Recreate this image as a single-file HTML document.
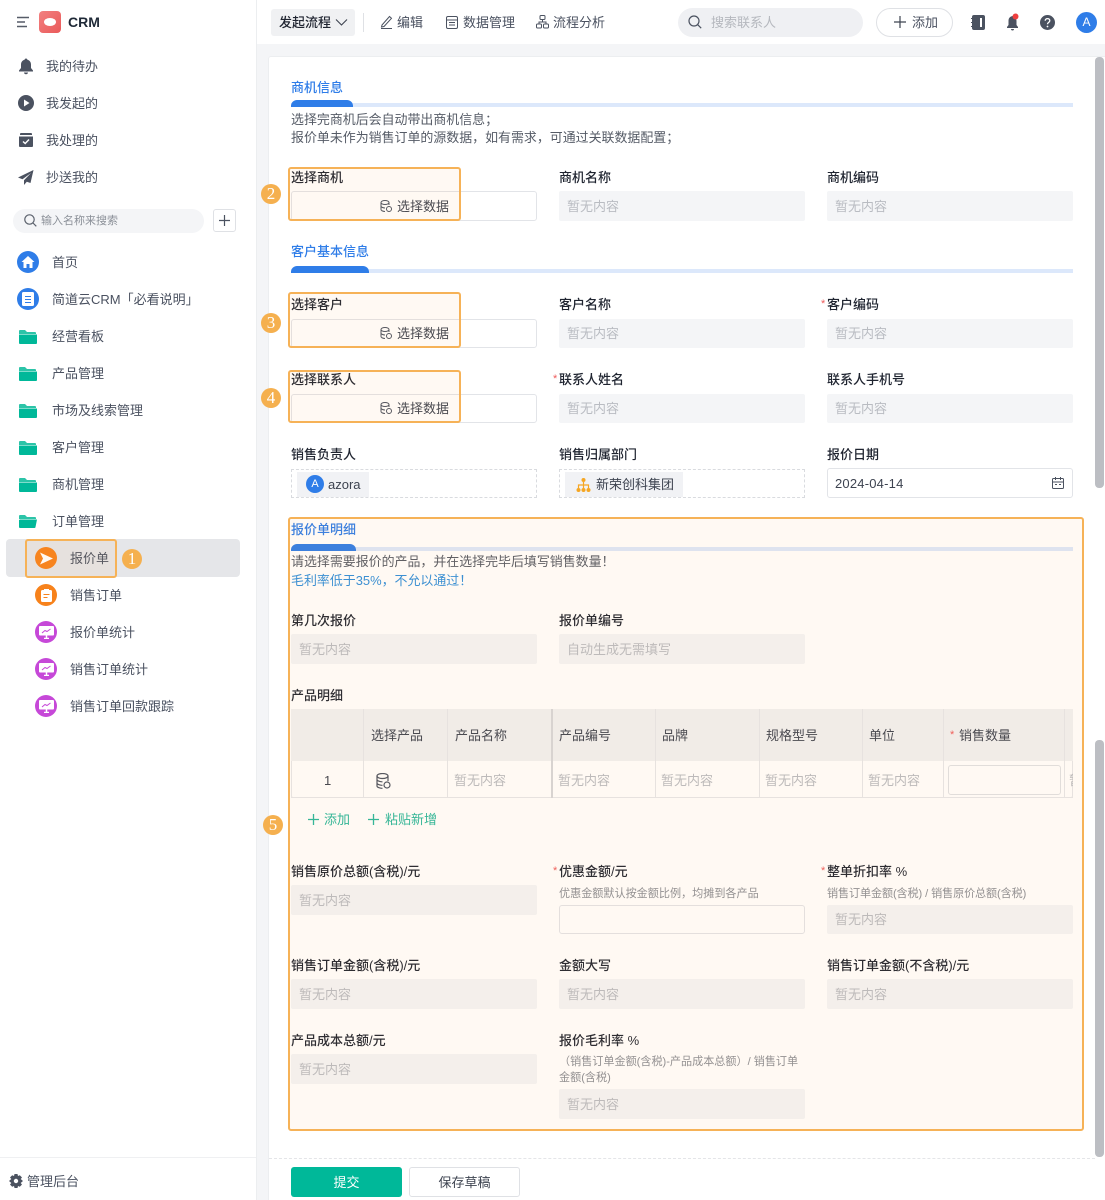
<!DOCTYPE html>
<html lang="zh"><head><meta charset="utf-8"><title>CRM</title>
<style>
html,body{margin:0;padding:0}
html{width:1105px;height:1200px;overflow:hidden}
body{width:1105px;height:1200px;position:relative;overflow:hidden;background:#f4f5f7;font-family:"Liberation Sans","Noto Sans CJK SC",sans-serif;font-size:13px;color:#1f2937}
div,svg{position:absolute;box-sizing:border-box}
.t,.l,.ti,.d,.sel,.hc,.c,.h{margin-top:1px}
.t{white-space:nowrap;line-height:18px;height:18px}
.m{color:#4a5160}
.l{white-space:nowrap;line-height:18px;height:18px;font-weight:500;color:#1f2430}
.f{width:246px;height:30px;background:#f4f5f7;border-radius:2px;color:#b9bcc2;padding-left:8px;line-height:32px;white-space:nowrap}
.i{width:246px;height:30px;background:#fff;border:1px solid #e2e4e8;border-radius:3px}
.ti{white-space:nowrap;line-height:18px;height:18px;color:#2f7de8;font-weight:500}
.bar{height:4px;left:291px;width:782px;background:#dce8fb}
.pill{height:7px;left:291px;background:#2f7de8;border-radius:6px 6px 0 0}
.o{border:2px solid #f6b257;background:rgba(255,176,80,.07);border-radius:3px;z-index:5}
.n{width:20px;height:20px;border-radius:50%;background:#f5b04f;color:#fff;text-align:center;line-height:20px;font-family:"Liberation Serif",serif;font-size:17px;z-index:6}
.d{white-space:nowrap;line-height:18px;height:18px;color:#555b66;font-size:12.95px}
.h{white-space:nowrap;line-height:16px;height:16px;color:#8b8f96;font-size:11.1px}
.sel{white-space:nowrap;line-height:18px;height:18px;color:#3d4350}
.th{top:709px;height:52px;background:#f0f1f3}
.v{width:1px;background:#e6e7ea;top:709px;height:89px}
.c{top:771px;color:#b9bcc2;white-space:nowrap;line-height:18px;height:18px;font-size:13px}
.hc{top:726px;color:#3d4350;white-space:nowrap;line-height:18px;height:18px}
.circ{width:22px;height:22px;border-radius:50%}
</style></head><body>

<!-- sidebar -->
<div style="left:0;top:0;width:257px;height:1200px;background:#fff;border-right:1px solid #eceef0"></div>
<svg style="left:16px;top:16px" width="14" height="12" viewBox="0 0 14 12"><path d="M1 1.500h12M1 6h8M1 10.500h10" stroke="#565c68" stroke-width="1.500" fill="none"/></svg>
<div style="left:39px;top:11px;width:22px;height:22px;border-radius:4px;background:linear-gradient(135deg,#f28080,#ea5a5a)"></div>
<div style="left:44px;top:18px;width:12px;height:8px;border-radius:50%;background:#fff"></div>
<div class="t" style="left:68px;top:12px;font-weight:700;font-size:14px;color:#1f2937">CRM</div>

<svg style="left:18px;top:58px" width="16" height="17" viewBox="0 0 16 17"><path d="M8 0.500c.8 0 1.300.5 1.400 1.300 2.500.6 3.600 2.600 3.600 5V10l2 2.500v1H1v-1L3 10V6.800c0-2.400 1.100-4.400 3.600-5C6.700 1 7.200.5 8 .5zM6 14.500h4c0 1-.9 1.800-2 1.800s-2-.8-2-1.800z" fill="#4b5260"/></svg>
<div class="t m" style="left:46px;top:57px">我的待办</div>
<svg style="left:18px;top:95px" width="16" height="16" viewBox="0 0 16 16"><circle cx="8" cy="8" r="8" fill="#4b5260"/><path d="M6 4.500l5.500 3.500L6 11.500z" fill="#fff"/></svg>
<div class="t m" style="left:46px;top:94px">我发起的</div>
<svg style="left:19px;top:133px" width="14" height="14" viewBox="0 0 14 14"><path d="M2 0h10a1 1 0 0 1 1 1v1H1V1a1 1 0 0 1 1-1zM0 3.500h14V13a1 1 0 0 1-1 1H1a1 1 0 0 1-1-1z" fill="#4b5260"/><path d="M4 8.500l2.200 2L10 6.500" stroke="#fff" stroke-width="1.400" fill="none"/></svg>
<div class="t m" style="left:46px;top:131px">我处理的</div>
<svg style="left:18px;top:170px" width="16" height="15" viewBox="0 0 16 15"><path d="M15.500 0L0 7.500l4.500 1.800L13 3 6 10.200V15l2.800-3.300 3.700 1.300z" fill="#4b5260"/></svg>
<div class="t m" style="left:46px;top:168px">抄送我的</div>

<div style="left:13px;top:209px;width:191px;height:24px;border-radius:12px;background:#f4f5f7"></div>
<svg style="left:24px;top:214px" width="13" height="13" viewBox="0 0 13 13"><circle cx="5.500" cy="5.500" r="4.700" stroke="#5c626d" stroke-width="1.200" fill="none"/><path d="M9 9l3.300 3.300" stroke="#5c626d" stroke-width="1.200"/></svg>
<div class="t" style="left:41px;top:211px;font-size:11px;color:#8b9098">输入名称来搜索</div>
<div style="left:213px;top:209px;width:23px;height:23px;border:1px solid #dfe1e5;border-radius:3px;background:#fff"></div>
<svg style="left:218px;top:214px" width="13" height="13" viewBox="0 0 13 13"><path d="M6.500 1v11M1 6.500h11" stroke="#4b5260" stroke-width="1.200"/></svg>

<div class="circ" style="left:17px;top:251px;background:#2f7de8"></div>
<svg style="left:21px;top:255px" width="14" height="14" viewBox="0 0 14 14"><path d="M7 1L0.500 7H2.500V13H5.500V9H8.500V13H11.500V7H13.500z" fill="#fff"/></svg>
<div class="t m" style="left:52px;top:253px">首页</div>
<div class="circ" style="left:17px;top:288px;background:#2f7de8"></div>
<svg style="left:22px;top:292px" width="12" height="14" viewBox="0 0 12 14"><rect width="12" height="14" rx="1.500" fill="#fff"/><path d="M3 4.500h6M3 7.500h6M3 10.500h6" stroke="#2f7de8" stroke-width="1"/></svg>
<div class="t m" style="left:52px;top:290px">简道云CRM「必看说明」</div>

<svg style="left:19px;top:330px" width="18" height="14" viewBox="0 0 18 14"><path d="M1 0h5l2 2h8a1 1 0 0 1 1 1v1H0V1a1 1 0 0 1 1-1z" fill="#2cc4a8"/><path d="M0 4.500h18V13a1 1 0 0 1-1 1H1a1 1 0 0 1-1-1z" fill="#00b899"/></svg>
<div class="t m" style="left:52px;top:327px">经营看板</div>
<svg style="left:19px;top:367px" width="18" height="14" viewBox="0 0 18 14"><path d="M1 0h5l2 2h8a1 1 0 0 1 1 1v1H0V1a1 1 0 0 1 1-1z" fill="#2cc4a8"/><path d="M0 4.500h18V13a1 1 0 0 1-1 1H1a1 1 0 0 1-1-1z" fill="#00b899"/></svg>
<div class="t m" style="left:52px;top:364px">产品管理</div>
<svg style="left:19px;top:404px" width="18" height="14" viewBox="0 0 18 14"><path d="M1 0h5l2 2h8a1 1 0 0 1 1 1v1H0V1a1 1 0 0 1 1-1z" fill="#2cc4a8"/><path d="M0 4.500h18V13a1 1 0 0 1-1 1H1a1 1 0 0 1-1-1z" fill="#00b899"/></svg>
<div class="t m" style="left:52px;top:401px">市场及线索管理</div>
<svg style="left:19px;top:441px" width="18" height="14" viewBox="0 0 18 14"><path d="M1 0h5l2 2h8a1 1 0 0 1 1 1v1H0V1a1 1 0 0 1 1-1z" fill="#2cc4a8"/><path d="M0 4.500h18V13a1 1 0 0 1-1 1H1a1 1 0 0 1-1-1z" fill="#00b899"/></svg>
<div class="t m" style="left:52px;top:438px">客户管理</div>
<svg style="left:19px;top:478px" width="18" height="14" viewBox="0 0 18 14"><path d="M1 0h5l2 2h8a1 1 0 0 1 1 1v1H0V1a1 1 0 0 1 1-1z" fill="#2cc4a8"/><path d="M0 4.500h18V13a1 1 0 0 1-1 1H1a1 1 0 0 1-1-1z" fill="#00b899"/></svg>
<div class="t m" style="left:52px;top:475px">商机管理</div>
<svg style="left:19px;top:515px" width="18" height="13" viewBox="0 0 18 13"><path d="M1 0h5l2 2h8a1 1 0 0 1 1 1v1H0V1a1 1 0 0 1 1-1z" fill="#2cc4a8"/><path d="M1 4.500h17L16.500 12a1 1 0 0 1-1 1H1a1 1 0 0 1-1-1V5z" fill="#00b899"/></svg>
<div class="t m" style="left:52px;top:512px">订单管理</div>

<div style="left:6px;top:539px;width:234px;height:38px;background:#e5e6e9;border-radius:4px"></div>
<div class="circ" style="left:35px;top:547px;background:#f7821b"></div>
<svg style="left:39px;top:552px" width="15" height="13" viewBox="0 0 15 13"><path d="M1 .5l13 6-13 6 3-6z" fill="#fff"/></svg>
<div class="t m" style="left:70px;top:549px">报价单</div>
<div class="o" style="left:25px;top:539px;width:92px;height:39px"></div>
<div class="n" style="left:122px;top:549px">1</div>

<div class="circ" style="left:35px;top:584px;background:#f7821b"></div>
<svg style="left:41px;top:589px" width="11" height="13" viewBox="0 0 11 13"><rect y="1" width="11" height="12" rx="1.500" fill="#fff"/><rect x="3" width="5" height="2.500" fill="#fff"/><path d="M2.500 5.500h6M2.500 8.500h4" stroke="#f7821b" stroke-width="1"/></svg>
<div class="t m" style="left:70px;top:586px">销售订单</div>

<div class="circ" style="left:35px;top:621px;background:#c648d8"></div>
<svg style="left:39px;top:626px" width="15" height="13" viewBox="0 0 15 13"><rect width="15" height="9.500" rx="1" fill="#fff"/><path d="M5 12.500h5M7.500 9v3" stroke="#fff" stroke-width="1.500"/><path d="M3 7l3-2.500 2 1L11.500 3" stroke="#c648d8" stroke-width="1" fill="none"/></svg>
<div class="t m" style="left:70px;top:623px">报价单统计</div>
<div class="circ" style="left:35px;top:658px;background:#c648d8"></div>
<svg style="left:39px;top:663px" width="15" height="13" viewBox="0 0 15 13"><rect width="15" height="9.500" rx="1" fill="#fff"/><path d="M5 12.500h5M7.500 9v3" stroke="#fff" stroke-width="1.500"/><path d="M3 7l3-2.500 2 1L11.500 3" stroke="#c648d8" stroke-width="1" fill="none"/></svg>
<div class="t m" style="left:70px;top:660px">销售订单统计</div>
<div class="circ" style="left:35px;top:695px;background:#c648d8"></div>
<svg style="left:39px;top:700px" width="15" height="13" viewBox="0 0 15 13"><rect width="15" height="9.500" rx="1" fill="#fff"/><path d="M5 12.500h5M7.500 9v3" stroke="#fff" stroke-width="1.500"/><path d="M3 7l3-2.500 2 1L11.500 3" stroke="#c648d8" stroke-width="1" fill="none"/></svg>
<div class="t m" style="left:70px;top:697px">销售订单回款跟踪</div>

<div style="left:0;top:1157px;width:256px;height:1px;background:#eff0f2"></div>
<svg style="left:9px;top:1174px" width="14" height="14" viewBox="0 0 14 14"><path d="M5.500 0h3l.5 2 1.800-.8L13 3.500 11.700 5 14 7l-2.300 2 1.300 1.500-2.200 2.300L9 12l-.5 2h-3L5 12l-1.800.8L1 10.500 2.300 9 0 7l2.300-2L1 3.500l2.200-2.300L5 2z" fill="#4b5260"/><circle cx="7" cy="7" r="2.200" fill="#fff"/></svg>
<div class="t m" style="left:27px;top:1172px">管理后台</div>

<!-- header -->
<div style="left:257px;top:0;width:848px;height:44px;background:#fff"></div>
<div style="left:271px;top:9px;width:84px;height:27px;background:#f0f1f3;border-radius:3px"></div>
<div class="t" style="left:279px;top:13px;font-weight:500;color:#1f2430">发起流程</div>
<svg style="left:335px;top:18px" width="13" height="9" viewBox="0 0 13 9"><path d="M1 1.500l5.500 5.500L12 1.500" stroke="#3d4350" stroke-width="1.100" fill="none"/></svg>
<div style="left:363px;top:13px;width:1px;height:19px;background:#dfe1e5"></div>
<svg style="left:380px;top:15px" width="13" height="14" viewBox="0 0 13 14"><path d="M2 10L9.500 1.500l2 1.800L4 11.500 1.500 12zM1 13.500h11" stroke="#4b5260" stroke-width="1" fill="none"/></svg>
<div class="t m" style="left:397px;top:13px">编辑</div>
<svg style="left:446px;top:16px" width="12" height="13" viewBox="0 0 12 13"><rect x=".5" y=".5" width="11" height="12" rx="1.500" stroke="#4b5260" fill="none"/><path d="M.5 4h11M3 6.500h6M3 9h6" stroke="#4b5260"/></svg>
<div class="t m" style="left:463px;top:13px">数据管理</div>
<svg style="left:536px;top:15px" width="13" height="14" viewBox="0 0 13 14"><rect x="4" y=".5" width="5" height="4" rx="1" stroke="#4b5260" fill="none"/><rect x=".5" y="9" width="5" height="4" rx="1" stroke="#4b5260" fill="none"/><rect x="7.500" y="9" width="5" height="4" rx="1" stroke="#4b5260" fill="none"/><path d="M6.500 4.500V7M3 9V7h7v2" stroke="#4b5260" fill="none"/></svg>
<div class="t m" style="left:553px;top:13px">流程分析</div>

<div style="left:678px;top:8px;width:185px;height:29px;border-radius:15px;background:#eff0f3"></div>
<svg style="left:688px;top:15px" width="14" height="14" viewBox="0 0 14 14"><circle cx="6" cy="6" r="5" stroke="#4b5260" stroke-width="1.200" fill="none"/><path d="M9.700 9.700l3.500 3.500" stroke="#4b5260" stroke-width="1.200"/></svg>
<div class="t" style="left:711px;top:13px;color:#b5b8be">搜索联系人</div>
<div style="left:876px;top:8px;width:77px;height:29px;border:1px solid #dfe1e5;border-radius:15px;background:#fff"></div>
<svg style="left:893px;top:15px" width="14" height="14" viewBox="0 0 14 14"><path d="M7 1v12M1 7h12" stroke="#3d4350" stroke-width="1.200"/></svg>
<div class="t m" style="left:912px;top:13px">添加</div>
<svg style="left:971px;top:15px" width="14" height="15" viewBox="0 0 14 15"><rect x="1" width="13" height="15" rx="2" fill="#4b5260"/><rect x="9" y="3" width="2" height="9" fill="#fff"/><path d="M0 3.500h2M0 7.500h2M0 11.500h2" stroke="#4b5260"/></svg>
<svg style="left:1006px;top:13px" width="15" height="18" viewBox="0 0 15 18"><path d="M6.500 3C4 3.500 2.500 5 2.500 8v4L1 14v1h11v-1l-1.500-2V8c0-3-1.500-4.500-4-5z" fill="#4b5260"/><path d="M5 16h3a1.500 1.500 0 0 1-3 0z" fill="#4b5260"/><circle cx="9.500" cy="3.500" r="3" fill="#ee3f3f"/></svg>
<svg style="left:1040px;top:15px" width="15" height="15" viewBox="0 0 15 15"><circle cx="7.500" cy="7.500" r="7.500" fill="#4b5260"/><path d="M5.200 5.800c0-1.400 1-2.200 2.300-2.200s2.300.8 2.300 2c0 1.800-2.300 1.800-2.300 3.600" stroke="#fff" stroke-width="1.300" fill="none"/><circle cx="7.500" cy="11.500" r=".9" fill="#fff"/></svg>
<div style="left:1076px;top:12px;width:21px;height:21px;border-radius:50%;background:#2f7de8;color:#fff;text-align:center;line-height:21px;font-size:12px">A</div>

<!-- card -->
<div style="left:268px;top:56px;width:837px;height:1144px;background:#fff;border:1px solid #eceef0;border-right:0;border-bottom:0;border-radius:3px 0 0 0"></div>
<div style="left:1095px;top:57px;width:9px;height:431px;background:#bcbec3;border-radius:4px"></div>
<div style="left:1095px;top:740px;width:9px;height:417px;background:#bcbec3;border-radius:4px"></div>

<!-- 商机信息 -->
<div class="ti" style="left:291px;top:78px">商机信息</div>
<div class="bar" style="top:103px"></div><div class="pill" style="top:100px;width:62px"></div>
<div class="d" style="left:291px;top:110px">选择完商机后会自动带出商机信息；</div>
<div class="d" style="left:291px;top:128px">报价单未作为销售订单的源数据，如有需求，可通过关联数据配置；</div>

<div class="l" style="left:291px;top:168px">选择商机</div>
<div class="i" style="left:291px;top:191px"></div>
<svg style="left:380px;top:200px" width="12" height="12" viewBox="0 0 12 12"><ellipse cx="5" cy="2.500" rx="4" ry="2" stroke="#4b5260" fill="none"/><path d="M1 2.500v7c0 1 2 2 4 2M1 6c0 1 2 2 4 2M9 2.500V5" stroke="#4b5260" fill="none"/><circle cx="9" cy="9" r="2.500" stroke="#4b5260" fill="none"/></svg>
<div class="sel" style="left:397px;top:197px">选择数据</div>
<div class="l" style="left:559px;top:168px">商机名称</div><div class="f" style="left:559px;top:191px">暂无内容</div>
<div class="l" style="left:827px;top:168px">商机编码</div><div class="f" style="left:827px;top:191px">暂无内容</div>
<div class="o" style="left:288px;top:167px;width:173px;height:54px"></div>
<div class="n" style="left:261px;top:184px">2</div>

<!-- 客户基本信息 -->
<div class="ti" style="left:291px;top:242px">客户基本信息</div>
<div class="bar" style="top:269px"></div><div class="pill" style="top:266px;width:78px"></div>

<div class="l" style="left:291px;top:295px">选择客户</div>
<div class="i" style="left:291px;top:319px;height:29px"></div>
<svg style="left:380px;top:327px" width="12" height="12" viewBox="0 0 12 12"><ellipse cx="5" cy="2.500" rx="4" ry="2" stroke="#4b5260" fill="none"/><path d="M1 2.500v7c0 1 2 2 4 2M1 6c0 1 2 2 4 2M9 2.500V5" stroke="#4b5260" fill="none"/><circle cx="9" cy="9" r="2.500" stroke="#4b5260" fill="none"/></svg>
<div class="sel" style="left:397px;top:324px">选择数据</div>
<div class="l" style="left:559px;top:295px">客户名称</div><div class="f" style="left:559px;top:319px;height:29px;line-height:29px">暂无内容</div>
<div class="l" style="left:827px;top:295px"><span style="color:#ee5b5b;position:absolute;left:-6px;top:-1px;font-size:11px">*</span>客户编码</div><div class="f" style="left:827px;top:319px;height:29px;line-height:29px">暂无内容</div>
<div class="o" style="left:288px;top:292px;width:173px;height:56px"></div>
<div class="n" style="left:261px;top:313px">3</div>

<div class="l" style="left:291px;top:370px">选择联系人</div>
<div class="i" style="left:291px;top:394px;height:29px"></div>
<svg style="left:380px;top:402px" width="12" height="12" viewBox="0 0 12 12"><ellipse cx="5" cy="2.500" rx="4" ry="2" stroke="#4b5260" fill="none"/><path d="M1 2.500v7c0 1 2 2 4 2M1 6c0 1 2 2 4 2M9 2.500V5" stroke="#4b5260" fill="none"/><circle cx="9" cy="9" r="2.500" stroke="#4b5260" fill="none"/></svg>
<div class="sel" style="left:397px;top:399px">选择数据</div>
<div class="l" style="left:559px;top:370px"><span style="color:#ee5b5b;position:absolute;left:-6px;top:-1px;font-size:11px">*</span>联系人姓名</div><div class="f" style="left:559px;top:394px;height:29px;line-height:29px">暂无内容</div>
<div class="l" style="left:827px;top:370px">联系人手机号</div><div class="f" style="left:827px;top:394px;height:29px;line-height:29px">暂无内容</div>
<div class="o" style="left:288px;top:370px;width:173px;height:53px"></div>
<div class="n" style="left:261px;top:388px">4</div>

<div class="l" style="left:291px;top:445px">销售负责人</div>
<div style="left:291px;top:469px;width:246px;height:29px;border:1px dashed #d9dbdf"></div>
<div style="left:297px;top:472px;width:72px;height:25px;background:#f1f2f5"></div>
<div style="left:306px;top:475px;width:18px;height:18px;border-radius:50%;background:#2f7de8;color:#fff;text-align:center;line-height:18px;font-size:11px">A</div>
<div class="t" style="left:328px;top:475px;color:#3d4350">azora</div>
<div class="l" style="left:559px;top:445px">销售归属部门</div>
<div style="left:559px;top:469px;width:246px;height:29px;border:1px dashed #d9dbdf"></div>
<div style="left:565px;top:472px;width:118px;height:25px;background:#f1f2f5"></div>
<svg style="left:576px;top:478px" width="15" height="14" viewBox="0 0 15 14"><circle cx="7.500" cy="2" r="2" fill="#f5a623"/><path d="M7.500 4v6M2.500 10V7h10v3" stroke="#f5a623" stroke-width="1.200" fill="none"/><circle cx="2.500" cy="12" r="2" fill="#f5a623"/><circle cx="7.500" cy="12" r="2" fill="#f5a623"/><circle cx="12.500" cy="12" r="2" fill="#f5a623"/></svg>
<div class="t" style="left:596px;top:475px;color:#3d4350">新荣创科集团</div>
<div class="l" style="left:827px;top:445px">报价日期</div>
<div class="i" style="left:827px;top:468px;height:30px;padding-left:7px;line-height:29px;color:#3d4350;letter-spacing:.2px">2024-04-14</div>
<svg style="left:1052px;top:477px" width="12" height="12" viewBox="0 0 12 12"><rect x=".5" y="1.500" width="11" height="10" rx="1" stroke="#4b5260" fill="none"/><path d="M.5 5h11M3.500 0v3M8.500 0v3M3 7.500h2M7 7.500h2" stroke="#4b5260" fill="none"/></svg>

<!-- 报价单明细 -->
<div class="ti" style="left:291px;top:520px">报价单明细</div>
<div class="bar" style="top:547px"></div><div class="pill" style="top:544px;width:65px"></div>
<div class="d" style="left:291px;top:552px">请选择需要报价的产品，并在选择完毕后填写销售数量！</div>
<div class="d" style="left:291px;top:571px;color:#2f8fdc">毛利率低于35%，不允以通过！</div>

<div class="l" style="left:291px;top:611px">第几次报价</div><div class="f" style="left:291px;top:634px">暂无内容</div>
<div class="l" style="left:559px;top:611px">报价单编号</div><div class="f" style="left:559px;top:634px">自动生成无需填写</div>
<div class="l" style="left:291px;top:686px">产品明细</div>

<!-- table -->
<div style="left:291px;top:709px;width:782px;height:89px;border:1px solid #e6e7ea;border-radius:2px;overflow:hidden"></div>
<div class="th" style="left:291px;width:782px"></div>
<div style="left:291px;top:797px;width:782px;height:1px;background:#e6e7ea"></div>
<div class="v" style="left:363px"></div><div class="v" style="left:447px"></div><div class="v" style="left:551px;width:2px;background:#d6d7da"></div><div class="v" style="left:655px"></div><div class="v" style="left:759px"></div><div class="v" style="left:862px"></div><div class="v" style="left:943px"></div><div class="v" style="left:1064px"></div>
<div class="hc" style="left:371px">选择产品</div><div class="hc" style="left:455px">产品名称</div><div class="hc" style="left:559px">产品编号</div><div class="hc" style="left:662px">品牌</div><div class="hc" style="left:766px">规格型号</div><div class="hc" style="left:869px">单位</div>
<div class="hc" style="left:950px;color:#ee5b5b;font-size:11px;top:725px">*</div><div class="hc" style="left:959px">销售数量</div>
<div class="t" style="left:324px;top:771px;color:#3d4350">1</div>
<svg style="left:376px;top:773px" width="15" height="16" viewBox="0 0 15 16"><ellipse cx="6.500" cy="3" rx="5.500" ry="2.500" stroke="#4b5260" stroke-width="1.200" fill="none"/><path d="M1 3v10c0 1.200 2.500 2.300 5.500 2.300M1 6.500c0 1.200 2.500 2.300 5.500 2.300M1 10c0 1.200 2.500 2.300 5.500 2.300M12 3v5" stroke="#4b5260" stroke-width="1.200" fill="none"/><circle cx="11" cy="12" r="3" stroke="#4b5260" stroke-width="1.200" fill="none"/></svg>
<div class="c" style="left:454px">暂无内容</div><div class="c" style="left:558px">暂无内容</div><div class="c" style="left:661px">暂无内容</div><div class="c" style="left:765px">暂无内容</div><div class="c" style="left:868px">暂无内容</div>
<div style="left:948px;top:765px;width:113px;height:30px;background:#fff;border:1px solid #dfe1e5;border-radius:3px"></div>
<div class="c" style="left:1069px;width:4px;overflow:hidden">暂</div>

<svg style="left:307px;top:813px" width="13" height="13" viewBox="0 0 13 13"><path d="M6.500 1v11M1 6.500h11" stroke="#27b79c" stroke-width="1.300"/></svg>
<div class="t" style="left:324px;top:810px;color:#27b79c">添加</div>
<svg style="left:367px;top:813px" width="13" height="13" viewBox="0 0 13 13"><path d="M6.500 1v11M1 6.500h11" stroke="#27b79c" stroke-width="1.300"/></svg>
<div class="t" style="left:385px;top:810px;color:#27b79c">粘贴新增</div>
<div class="n" style="left:263px;top:815px">5</div>

<div class="l" style="left:291px;top:862px">销售原价总额(含税)/元</div><div class="f" style="left:291px;top:885px">暂无内容</div>
<div class="l" style="left:559px;top:862px"><span style="color:#ee5b5b;position:absolute;left:-6px;top:-1px;font-size:11px">*</span>优惠金额/元</div>
<div class="h" style="left:559px;top:885px">优惠金额默认按金额比例，均摊到各产品</div>
<div class="i" style="left:559px;top:905px;height:29px"></div>
<div class="l" style="left:827px;top:862px"><span style="color:#ee5b5b;position:absolute;left:-6px;top:-1px;font-size:11px">*</span>整单折扣率 %</div>
<div class="h" style="left:827px;top:885px;letter-spacing:-.1px">销售订单金额(含税) / 销售原价总额(含税)</div>
<div class="f" style="left:827px;top:905px;height:29px;line-height:29px">暂无内容</div>

<div class="l" style="left:291px;top:956px">销售订单金额(含税)/元</div><div class="f" style="left:291px;top:979px">暂无内容</div>
<div class="l" style="left:559px;top:956px">金额大写</div><div class="f" style="left:559px;top:979px">暂无内容</div>
<div class="l" style="left:827px;top:956px">销售订单金额(不含税)/元</div><div class="f" style="left:827px;top:979px">暂无内容</div>

<div class="l" style="left:291px;top:1031px">产品成本总额/元</div><div class="f" style="left:291px;top:1054px">暂无内容</div>
<div class="l" style="left:559px;top:1031px">报价毛利率 %</div>
<div class="h" style="left:559px;top:1053px">（销售订单金额(含税)-产品成本总额）/ 销售订单</div>
<div class="h" style="left:559px;top:1069px">金额(含税)</div>
<div class="f" style="left:559px;top:1089px">暂无内容</div>

<div class="o" style="left:288px;top:517px;width:796px;height:614px;z-index:5"></div>

<!-- footer -->
<div style="left:269px;top:1158px;width:826px;height:0;border-top:1px dashed #e4e5e8"></div>
<div style="left:291px;top:1167px;width:111px;height:30px;background:#00b899;border-radius:3px;color:#fff;text-align:center;line-height:31px">提交</div>
<div style="left:409px;top:1167px;width:111px;height:30px;background:#fff;border:1px solid #dfe1e5;border-radius:3px;color:#3d4350;text-align:center;line-height:29px">保存草稿</div>
</body></html>
